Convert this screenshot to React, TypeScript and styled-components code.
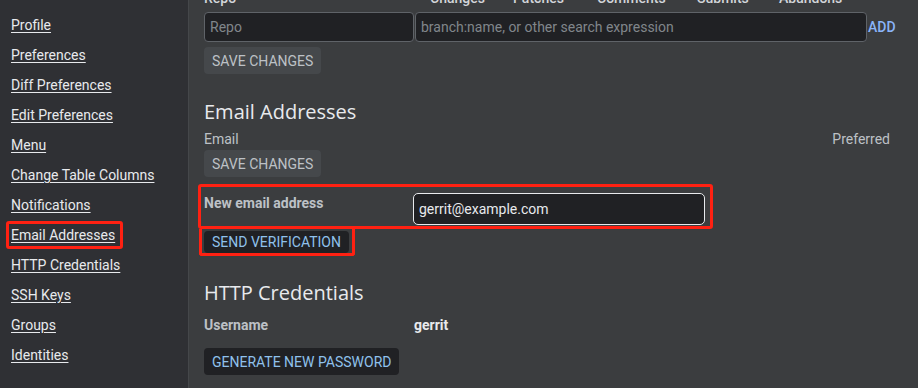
import styled, { createGlobalStyle } from "styled-components";

const GlobalStyle = createGlobalStyle`
  html, body {
    margin: 0;
    padding: 0;
    background: #3b3d3f;
    overflow: hidden;
  }
  body {
    font-family: Roboto, "Liberation Sans", sans-serif;
    font-size: 14px;
    color: #e8eaed;
  }
`;

const navItems = [
  "Profile",
  "Preferences",
  "Diff Preferences",
  "Edit Preferences",
  "Menu",
  "Change Table Columns",
  "Notifications",
  "Email Addresses",
  "HTTP Credentials",
  "SSH Keys",
  "Groups",
  "Identities",
];

const columns = [
  { label: "Repo", width: 226 },
  { label: "Changes", width: 83 },
  { label: "Patches", width: 84 },
  { label: "Comments", width: 100 },
  { label: "Submits", width: 82 },
  { label: "Abandons", width: 80 },
];

function App() {
  return (
    <>
      <GlobalStyle />
      <Page>
        <Sidebar>
          {navItems.map((item) => (
            <NavRow key={item}>
              <NavLink href="#" $marked={item === "Email Addresses"}>
                {item}
              </NavLink>
            </NavRow>
          ))}
        </Sidebar>
        <Main>
          <HeaderRow>
            {columns.map((c) => (
              <HeaderCell key={c.label} style={{ width: c.width }}>
                {c.label}
              </HeaderCell>
            ))}
          </HeaderRow>
          <InputRow>
            <TextInput $width={210} placeholder="Repo" />
            <TextInput
              $width={452}
              placeholder="branch:name, or other search expression"
            />
            <LinkButton>ADD</LinkButton>
          </InputRow>
          <Button disabled>SAVE CHANGES</Button>

          <Heading>Email Addresses</Heading>
          <TableHead>
            <span>Email</span>
            <span>Preferred</span>
          </TableHead>
          <Button disabled $gap={1}>
            SAVE CHANGES
          </Button>

          <FieldRow $marked>
            <Label>New email address</Label>
            <EmailInput defaultValue="gerrit@example.com" />
          </FieldRow>
          <Marked>
            <Button $primary $gap={2} $height={22}>
              SEND VERIFICATION
            </Button>
          </Marked>

          <Heading $top={23}>HTTP Credentials</Heading>
          <InfoRow>
            <Label>Username</Label>
            <Value>gerrit</Value>
          </InfoRow>
          <Button $primary $gap={15}>
            GENERATE NEW PASSWORD
          </Button>
        </Main>
      </Page>
    </>
  );
}

const Page = styled.div`
  display: flex;
  width: 918px;
  height: 388px;
  overflow: hidden;
`;

const Sidebar = styled.nav`
  width: 189px;
  flex-shrink: 0;
  background: #2f3034;
  border-right: 1px solid #45474a;
  padding-top: 10px;
  box-sizing: border-box;
`;

const NavRow = styled.div`
  height: 30px;
  display: flex;
  align-items: center;
  padding-left: 11px;
`;

const NavLink = styled.a<{ $marked?: boolean }>`
  color: #e8eaed;
  font-size: 14px;
  text-decoration: underline;
  text-underline-offset: 2px;
  ${(p) =>
    p.$marked &&
    `
    border: 3px solid #ff2112;
    border-radius: 3px;
    padding: 3px 5px 3px 2px;
    margin-left: -5px;
  `}
`;

const Main = styled.main`
  flex: 1;
  padding-left: 15px;
  display: flex;
  flex-direction: column;
  align-items: flex-start;
`;

const HeaderRow = styled.div`
  display: flex;
  height: 20px;
  line-height: 20px;
  margin-top: -12px;
  color: #d2d5d9;
  font-weight: 500;
`;

const HeaderCell = styled.div`
  flex-shrink: 0;
`;

const InputRow = styled.div`
  display: flex;
  align-items: center;
  margin-top: 4px;
`;

const TextInput = styled.input<{ $width: number }>`
  width: ${(p) => p.$width}px;
  height: 30px;
  box-sizing: border-box;
  background: #202124;
  border: 1px solid #5f6368;
  border-radius: 4px;
  color: #e8eaed;
  font: 14px Roboto, "Liberation Sans", sans-serif;
  padding: 0 5px;
  margin-right: 1px;
  &::placeholder {
    color: #80868b;
  }
`;

const LinkButton = styled.span`
  color: #8ab4f8;
  font-weight: 500;
  font-size: 14px;
`;

const Button = styled.button<{
  $primary?: boolean;
  $gap?: number;
  $height?: number;
}>`
  height: ${(p) => p.$height ?? 27}px;
  margin-top: ${(p) => p.$gap ?? 5}px;
  padding: 0 8px;
  border: none;
  border-radius: 4px;
  font: 14px Roboto, "Liberation Sans", sans-serif;
  background: ${(p) => (p.$primary ? "#202124" : "#45484b")};
  color: ${(p) => (p.$primary ? "#8fc1ec" : "#bdc1c6")};
  cursor: pointer;
`;

const Heading = styled.h2<{ $top?: number }>`
  font-family: "Open Sans", "Noto Sans", sans-serif;
  font-weight: 400;
  font-size: 20px;
  line-height: 28px;
  margin: ${(p) => p.$top ?? 24}px 0 0;
  color: #e8eaed;
`;

const TableHead = styled.div`
  display: flex;
  justify-content: space-between;
  width: 686px;
  margin-top: 3px;
  line-height: 20px;
  color: #bdc1c6;
`;

const FieldRow = styled.div<{ $marked?: boolean }>`
  display: grid;
  grid-template-columns: 209px 292px;
  align-items: start;
  margin-top: 7px;
  margin-left: -6px;
  padding: 6px 5px 1px 3px;
  border: 3px solid ${(p) => (p.$marked ? "#ff2112" : "transparent")};
  border-radius: 3px;
`;

const Label = styled.div`
  font-weight: 700;
  color: #bdc1c6;
  line-height: 16px;
  margin-top: 2px;
`;

const EmailInput = styled.input`
  height: 32px;
  box-sizing: border-box;
  background: #202124;
  border: 1px solid #e8eaed;
  border-radius: 5px;
  color: #e8eaed;
  font: 14px Roboto, "Liberation Sans", sans-serif;
  padding: 0 5px;
  outline: none;
`;

const Marked = styled.div`
  margin-left: -5px;
  padding: 0 3px 0 2px;
  border: 3px solid #ff2112;
  border-top: none;
  border-radius: 0 0 3px 3px;
`;

const InfoRow = styled.div`
  display: grid;
  grid-template-columns: 210px auto;
  margin-top: 8px;
  line-height: 16px;
`;

const Value = styled.div`
  font-weight: 700;
  color: #e8eaed;
  margin-top: 2px;
`;

export default App;
